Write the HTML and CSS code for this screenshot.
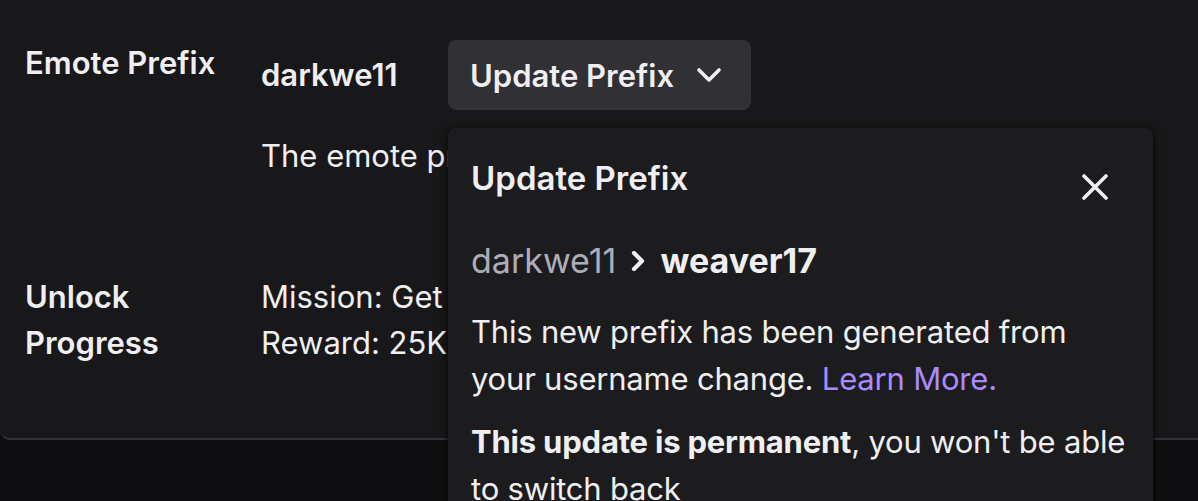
FILE: index.html
```html
<!DOCTYPE html>
<html lang="en">
<head>
    <meta charset="UTF-8">
    <meta name="viewport" content="width=device-width, initial-scale=1.0">
    <title>Emote Prefix</title>
    <link rel="stylesheet" href="styles.css">
</head>
<body>
    <div class="card">
        <div class="setting">
            <div class="setting-label">Emote Prefix</div>
            <div class="setting-body">
                <div class="prefix-row">
                    <span class="prefix-value">darkwe11</span>
                    <div class="prefix-menu">
                        <button class="btn-secondary">
                            Update Prefix
                            <svg width="26" height="16" viewBox="0 0 26 16"><polyline points="3,3 13,13 23,3" fill="none" stroke="#efeff1" stroke-width="3.6" stroke-linecap="round" stroke-linejoin="round"/></svg>
                        </button>
                        <div class="popover">
                            <div class="popover-head">
                                <h2>Update Prefix</h2>
                                <button class="btn-close" aria-label="Close">
                                    <svg width="26" height="26" viewBox="0 0 26 26"><path d="M2 2 L24 24 M24 2 L2 24" stroke="#efeff1" stroke-width="3.6" stroke-linecap="round"/></svg>
                                </button>
                            </div>
                            <div class="prefix-change">
                                <span class="old">darkwe11</span>
                                <svg width="16" height="20" viewBox="0 0 16 20"><polyline points="4,2 12,10 4,18" fill="none" stroke="#efeff1" stroke-width="4.2" stroke-linecap="round" stroke-linejoin="round"/></svg>
                                <span class="new">weaver17</span>
                            </div>
                            <p>This new prefix has been generated from your username change. <a href="#">Learn More.</a></p>
                            <p><strong>This update is permanent</strong>, you won't be able to switch back</p>
                            <div class="popover-actions">
                                <button class="btn-secondary">Cancel</button>
                                <button class="btn-primary">Update</button>
                            </div>
                        </div>
                    </div>
                </div>
                <p class="setting-desc">The emote prefix is shown in front of every emote.</p>
            </div>
        </div>
        <div class="setting setting-last">
            <div class="setting-label">Unlock Progress</div>
            <div class="setting-body">
                <p>Mission: Get 5 subs</p>
                <p>Reward: 25K bits</p>
            </div>
        </div>
    </div>
</body>
</html>
```

FILE: styles.css
```css
html, body {
    height: 100%;
}
body {
    margin: 0;
    overflow: hidden;
    background: #0e0e10;
    color: #efeff1;
    font-family: 'Inter', 'Roboto', sans-serif;
    font-size: 31px;
    line-height: 46px;
}
p {
    margin: 0;
}
.card {
    background: #18181b;
    border-bottom: 2px solid #34343a;
    border-radius: 0 0 0 10px;
    padding: 40px 0 72px 25px;
}
.setting {
    display: flex;
}
.setting-last {
    margin-top: 95px;
}
.setting-label {
    width: 200px;
    margin-right: 36px;
    font-weight: 600;
}
.prefix-row {
    display: flex;
    align-items: center;
    height: 70px;
}
.prefix-value {
    width: 187px;
    font-weight: 600;
}
.prefix-menu {
    position: relative;
}
button {
    font-family: inherit;
    color: #efeff1;
    border: none;
    cursor: pointer;
}
.btn-secondary {
    display: flex;
    align-items: center;
    gap: 22px;
    height: 70px;
    padding: 0 29px 0 22px;
    border-radius: 8px;
    background: #303035;
    font-size: 31px;
    font-weight: 600;
}
.btn-primary {
    height: 70px;
    padding: 0 22px;
    border-radius: 8px;
    background: #9147ff;
    font-size: 31px;
    font-weight: 600;
}
.setting-desc {
    margin-top: 23px;
}
.popover {
    position: absolute;
    top: 88px;
    left: 0;
    z-index: 10;
    width: 705px;
    box-sizing: border-box;
    padding: 28px 20px 28px 23px;
    background: #1c1c1f;
    border-radius: 8px;
    box-shadow: 0 4px 10px rgba(0, 0, 0, 0.6), 0 0 4px rgba(0, 0, 0, 0.5);
}
.popover-head {
    display: flex;
    justify-content: space-between;
    align-items: flex-start;
}
.popover-head h2 {
    margin: 0;
    font-size: 33px;
    line-height: 44px;
    font-weight: 600;
}
.btn-close {
    display: flex;
    align-items: center;
    justify-content: center;
    width: 46px;
    height: 46px;
    margin: 8px 15px 0 0;
    background: none;
    padding: 0;
}
.prefix-change {
    display: flex;
    align-items: center;
    gap: 14px;
    margin-top: 28px;
    font-size: 34px;
    line-height: 46px;
}
.prefix-change .old {
    color: #adadb8;
}
.prefix-change .new {
    font-weight: 700;
}
.popover p {
    margin-top: 24px;
    line-height: 47px;
    letter-spacing: -0.2px;
}
.popover p + p {
    margin-top: 16px;
}
.popover a {
    color: #a98bff;
    text-decoration: none;
}
.popover strong {
    font-weight: 700;
}
.popover-actions {
    display: flex;
    justify-content: flex-end;
    gap: 14px;
    margin-top: 30px;
}
```
